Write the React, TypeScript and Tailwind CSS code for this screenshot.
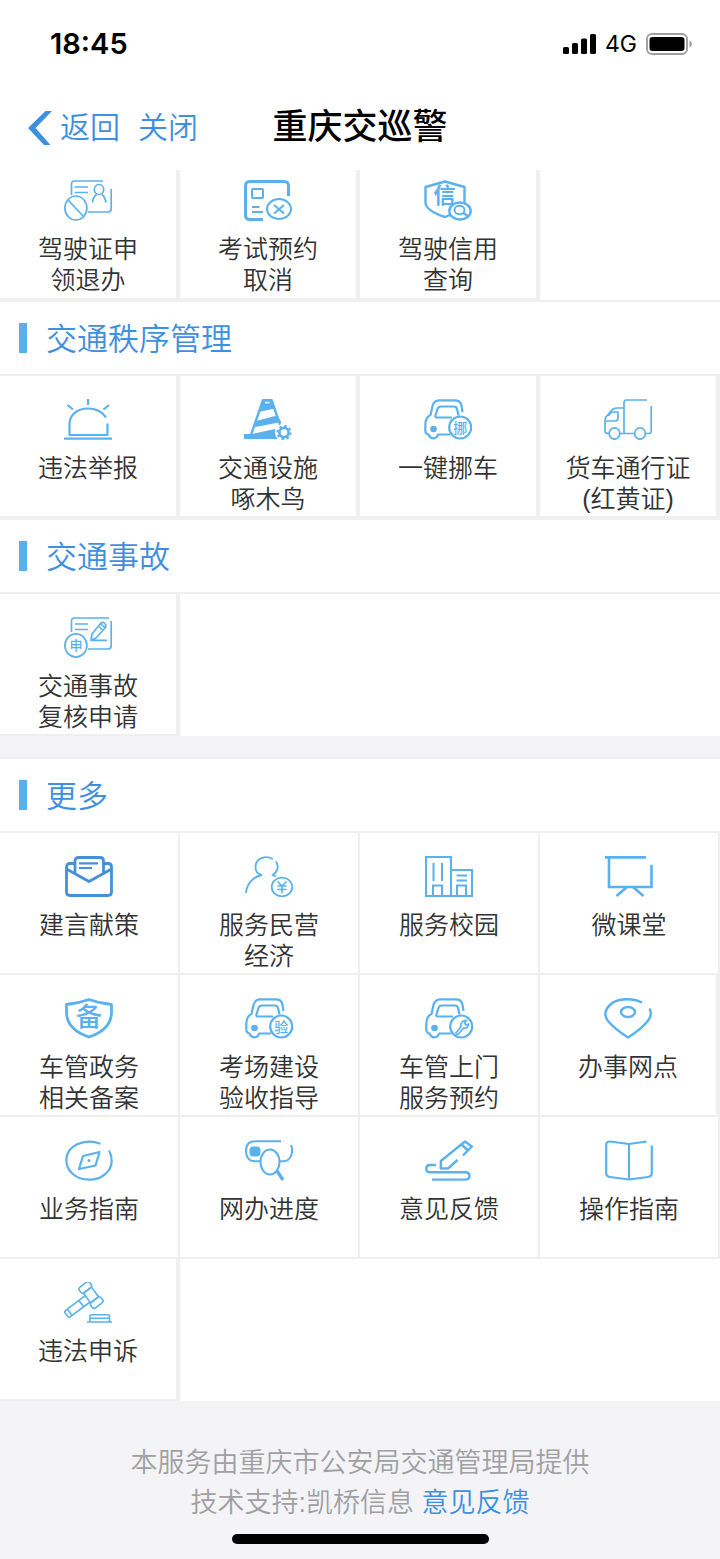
import { Fragment, ReactNode } from "react";

type Service = {
	label: string;
	icon: ReactNode;
	thick?: boolean;
};

// Small character drawn inside an icon
const Glyph = ({ x, y, size, children }: { x: number; y: number; size: number; children: string }) => (
	<text x={x} y={y} fontSize={size} fontWeight="500" textAnchor="middle" fill="currentColor" stroke="none">
		{children}
	</text>
);

const Icon = ({ children, width = 2 }: { children: ReactNode; width?: number }) => (
	<svg
		viewBox="0 0 48 41"
		className="h-[41px] w-12"
		fill="none"
		stroke="currentColor"
		strokeWidth={width}
		strokeLinejoin="round"
		aria-hidden="true"
	>
		{children}
	</svg>
);

const Car = ({ children }: { children: ReactNode }) => (
	<Icon width={2.2}>
		<path d="M38.5 13C37.5 5 37 1.3 31 1.3H15Q10 1.3 8.5 7L6.5 16C1.8 18 1.3 22 1.3 26V32Q1.5 35 4.5 35.5Q6 39.3 9.5 39.3Q13 39.3 14 35.5H26" />
		<path d="M28 18.5H12.5Q11 18.5 11.4 16.5L13.5 10Q14.3 7.5 17 7.5H30Q32.5 7.5 33 10L34.5 16.5" />
		<circle cx="9.5" cy="30" r="3.3" fill="currentColor" stroke="none" />
		<circle cx="36.2" cy="28.5" r="11" />
		{children}
	</Icon>
);

const icons = {
	licenseCancel: (
		<Icon width={1.7}>
			<path d="M7.5 15V4Q7.5 1 10.5 1H39M47.2 9V29Q47.2 32 44 32H24M10.5 7H24M10.5 12.5H24" />
			<ellipse cx="35" cy="9.5" rx="4.7" ry="5" />
			<path d="M28.5 22.5Q29 17 32.5 14.5M42 22.5Q41 17 38 14.5" />
			<ellipse cx="11.9" cy="28" rx="11" ry="12" />
			<path d="M4 20L20 37" />
		</Icon>
	),
	examCancel: (
		<Icon>
			<path d="M44.5 16V6Q44.5 1.5 40 1.5H6Q1.5 1.5 1.5 6V35Q1.5 39.5 6 39.5H19" strokeWidth="3" />
			<rect x="8" y="9" width="11" height="9" rx="1" />
			<path d="M8 27H15.5M8 32H19M30 25L40 33.5M40 25L30 33.5" />
			<ellipse cx="35" cy="29" rx="12" ry="10" />
		</Icon>
	),
	credit: (
		<Icon width={2.4}>
			<path d="M40.5 23V7L21 1.5L1.5 7V23C2 30 12 34 21 37L27 34.5" />
			<text x="20.5" y="23" fontSize="22" fontWeight="bold" textAnchor="middle" fill="currentColor" stroke="none">
				信
			</text>
			<ellipse cx="36" cy="31" rx="10.7" ry="8.5" />
			<ellipse cx="35.5" cy="30" rx="5" ry="4.2" strokeWidth="2" />
			<path d="M39 33L43.5 35.5" />
		</Icon>
	),
	siren: (
		<Icon width={2.2}>
			<path d="M0 39.7H48M42 18.5C38 12.5 31 9.5 24 9.5C13 9.5 5.5 16 5.5 25V36H43.5V24.5M24 0V6M3.5 6L9 10.5M45 6L39.5 10.5" />
		</Icon>
	),
	cone: (
		<Icon>
			<path d="M19 1L7 36M27.5 1L36.5 27" strokeWidth="2.4" />
			<path
				d="M18.5 0H27.5Q28.5 0 29 2L31 9.5L14.5 13ZM12 22L33 16.5L37.5 23L9 28.5ZM0 35H8L31 30L34 40H0Z"
				fill="currentColor"
				stroke="none"
			/>
			<path d="M21 3.6H25.5" stroke="white" strokeWidth="1.4" />
			<circle cx="40" cy="33.5" r="9" fill="white" stroke="none" />
			<circle cx="40" cy="33.5" r="4.6" strokeWidth="2.6" />
			<circle cx="40" cy="33.5" r="6.6" strokeWidth="2" strokeDasharray="2.6 2.58" />
		</Icon>
	),
	moveCar: (
		<Car>
			<Glyph x={36.2} y={33.5} size={14}>挪</Glyph>
		</Car>
	),
	truck: (
		<Icon width={1.7}>
			<path d="M43 1H22Q20 1 20 4V34.5M47.2 7V32Q47.2 34.5 45 34.5H41.5M16 34.5H30.5M20 9H13Q9 9 7 12L2 18Q1 20 1 22V32Q1 34.5 5 34.5" />
			<path d="M1 22H11Q14 22 14 19V13H8Q6 14 4.5 17" />
			<ellipse cx="10.5" cy="34.5" rx="5.3" ry="5.7" />
			<ellipse cx="36" cy="34.5" rx="5.3" ry="5.7" />
		</Icon>
	),
	review: (
		<Icon width={1.7}>
			<path d="M7.5 15V4Q7.5 1 10.5 1H45M47.2 4V29Q47.2 32 44 32H24M11 7H24M11 12.5H24" />
			<path d="M27 23.3L28 17L37 6Q39 4.5 41 6.8Q42.8 9 41 11L32 21ZM34.5 9L39 13.5M37 7L41 11M27 23.3H43" />
			<ellipse cx="11.9" cy="28.5" rx="11" ry="11.6" />
			<Glyph x={11.9} y={33} size={13}>申</Glyph>
		</Icon>
	),
	letter: (
		<span className="text-[#4491d8]">
			<Icon width={2.8}>
				<path d="M10 7.5H5Q1.5 7.5 1.5 11V36Q1.5 39.5 5 39.5H43Q46.5 39.5 46.5 36V11Q46.5 7.5 43 7.5H39M1.5 13L24 25.5L46.5 13" />
				<path d="M10 17V5Q10 1.5 13.5 1.5H35Q38.5 1.5 38.5 5V17" />
				<path d="M14 7.3H33M14 12H27" strokeWidth="2.2" />
			</Icon>
		</span>
	),
	economy: (
		<Icon width={1.8}>
			<path d="M28 3C21-1 10.5 2 10.5 11C10.5 15 13 18 16.5 19C8 21 1.5 28 1 37M31 5.5C34 10 33 16 27.5 19L31 20.5" />
			<ellipse cx="37" cy="31" rx="10.3" ry="9.3" />
			<path d="M32.5 25.5L37 30L41.5 25.5M37 30V37M32.5 30H41.5M32.5 33.5H41.5" strokeWidth="1.6" />
		</Icon>
	),
	campus: (
		<Icon>
			<path d="M1 1H26V40H1ZM26 14H47V40H26M8.5 7V25M17 7V25M8 40V29.5H17V40M31.5 19.5H42M31.5 24.5H42M32 40V29.5H41V40" strokeLinejoin="miter" />
		</Icon>
	),
	board: (
		<Icon width={2.6}>
			<path d="M0 1.4H41M4 1.4V31H46.5V9M22 31L11.5 40M28 31L38.5 40" strokeLinejoin="miter" />
		</Icon>
	),
	shield: (
		<Icon width={2.8}>
			<path d="M24 1.5Q35 5.5 46.5 6.5V14C46.5 28 36 35 24 39C12 35 1.5 28 1.5 14V6.5Q13 5.5 24 1.5Z" />
			<Glyph x={24} y={28} size={26}>备</Glyph>
		</Icon>
	),
	carCheck: (
		<Car>
			<Glyph x={36.2} y={33.5} size={14}>验</Glyph>
		</Car>
	),
	carRepair: (
		<Car>
			<path
				d="M41.5 22.5L39.5 25L41 27L43.5 26C43.5 29 41 31 38.5 30L33 36.5Q31 37 31 35L36 28.5C35 25 38 22 41.5 22.5Z"
				strokeWidth="1.7"
			/>
		</Car>
	),
	pin: (
		<Icon width={2.4}>
			<path d="M38 4.5C29 0 14 0 7 6C0 12 .5 18 4 23C9 29 17 35 24 39.5C32 34.5 40 28 44.5 22C47 18 47.5 14 45.5 10.5" />
			<ellipse cx="24" cy="14" rx="7" ry="5" />
		</Icon>
	),
	compass: (
		<Icon width={2.2}>
			<path d="M35.5 3.8C19-2.5 1.3 6 1.3 20C1.3 31 11 39.7 24 39.7C37 39.7 46.7 31 46.7 21C46.7 17 46 14 44 10.5" />
			<path d="M18 16L34.5 12L30.5 25.5L14 29Z" />
			<circle cx="24" cy="20.5" r="1.5" fill="currentColor" stroke="none" />
		</Icon>
	),
	progress: (
		<Icon>
			<path d="M36 1.2H10C4 1.2 1 5 1 11C1 17 4 21.3 10 21.3H15.5M46 5C48.8 12 46 21.3 38 21.3H34.5" />
			<rect x="4.5" y="6.5" width="11" height="10" rx="4" fill="currentColor" stroke="none" />
			<ellipse cx="25" cy="22" rx="9.5" ry="12.5" />
			<path d="M32 31L38 40" strokeWidth="3.2" />
		</Icon>
	),
	feedback: (
		<Icon width={2.4}>
			<path d="M32.5 20L23 28.5H15.8V21L40 1.5L46.8 6.5L38 15.5M36.5 4.5L42.5 10" />
			<path d="M11 25H5Q1.3 25 1.3 28.5Q1.3 32.3 5 32.3H40Q44.5 32.3 44.5 36Q44.5 39.6 40 39.6H7" />
		</Icon>
	),
	book: (
		<Icon width={2.2}>
			<path d="M41.5 1.5L24 4L5 1.5Q1.2 1.2 1.2 5V33Q1.2 36.5 5 37L24 39.5L43 37Q46.8 36.5 46.8 33V5.5M24 4V39.5" />
		</Icon>
	),
	gavel: (
		<Icon width={1.6}>
			<path d="M23 40H48M26 40V34Q26 32.7 27.5 32.7H44Q45.5 32.7 45.5 34V40M26 36.3H45.5" />
			<g transform="translate(27 13) rotate(-37)">
				<rect x="-6.5" y="-13" width="13" height="7" rx="2.5" />
				<rect x="-5" y="-6" width="10" height="12" />
				<rect x="-6.5" y="6" width="13" height="7" rx="2.5" />
				<path d="M-5-3H-29Q-31.5-3-31.5-1V3Q-31.5 5-29 5H-5M-27.5-3V5M-13-3V5" />
			</g>
		</Icon>
	),
};

const license: Service[] = [
	{ label: "驾驶证申\n领退办", icon: icons.licenseCancel, thick: true },
	{ label: "考试预约\n取消", icon: icons.examCancel, thick: true },
	{ label: "驾驶信用\n查询", icon: icons.credit, thick: true },
];

const order: Service[] = [
	{ label: "违法举报", icon: icons.siren, thick: true },
	{ label: "交通设施\n啄木鸟", icon: icons.cone, thick: true },
	{ label: "一键挪车", icon: icons.moveCar, thick: true },
	{ label: "货车通行证\n(红黄证)", icon: icons.truck, thick: true },
];

const accident: Service[] = [{ label: "交通事故\n复核申请", icon: icons.review, thick: true }];

const more: Service[] = [
	{ label: "建言献策", icon: icons.letter },
	{ label: "服务民营\n经济", icon: icons.economy },
	{ label: "服务校园", icon: icons.campus },
	{ label: "微课堂", icon: icons.board },
	{ label: "车管政务\n相关备案", icon: icons.shield },
	{ label: "考场建设\n验收指导", icon: icons.carCheck },
	{ label: "车管上门\n服务预约", icon: icons.carRepair },
	{ label: "办事网点", icon: icons.pin, thick: true },
	{ label: "业务指南", icon: icons.compass },
	{ label: "网办进度", icon: icons.progress },
	{ label: "意见反馈", icon: icons.feedback },
	{ label: "操作指南", icon: icons.book },
	{ label: "违法申诉", icon: icons.gavel, thick: true },
];

const ServiceGrid = ({ items, first }: { items: Service[]; first?: boolean }) => (
	<div className="grid grid-cols-4 bg-white">
		{items.map(item => (
			<a
				key={item.label}
				href="#"
				className={`flex flex-col items-center gap-[13px] border-b-2 border-[#efefef] ${
					first ? "h-[130px] pt-[10px]" : "h-[142px] pt-[23px]"
				} ${item.thick ? "border-r-4" : "border-r-2"}`}
			>
				<span className="text-[#5ab1ee]">{item.icon}</span>
				<span className="whitespace-pre text-center text-[25px] leading-[31px] text-[#333]">{item.label}</span>
			</a>
		))}
	</div>
);

const SectionTitle = ({ children }: { children: string }) => (
	<div className="flex h-[76px] items-center border-y-2 border-[#f0f0f0] bg-white pl-[19px]">
		<span className="h-[30px] w-2 bg-[#5aaeea]" />
		<h2 className="pl-[19px] pt-1 text-[31px] leading-10 text-[#3f8fe0]">{children}</h2>
	</div>
);

const StatusBar = () => (
	<div className="flex h-[88px] items-center justify-between pl-[50px] pr-7 font-[Inter,sans-serif] text-black">
		<span className="text-[29px] font-semibold">18:45</span>
		<div className="flex items-center gap-[9px]">
			<svg viewBox="0 0 33 20" className="h-5 w-[33px]" aria-hidden="true">
				<rect x="0" y="13" width="6" height="7" rx="1.5" />
				<rect x="9" y="9" width="6" height="11" rx="1.5" />
				<rect x="18" y="4.5" width="6" height="15.5" rx="1.5" />
				<rect x="27" y="0" width="6" height="20" rx="1.5" />
			</svg>
			<span className="text-[23px] font-normal">4G</span>
			<svg viewBox="0 0 46 22" className="h-[22px] w-[46px]" aria-hidden="true">
				<rect x="1" y="1" width="40" height="20" rx="5" fill="none" stroke="#a0a0a0" strokeWidth="2" />
				<rect x="3.5" y="4" width="35" height="14" rx="3" />
				<path d="M43.5 7.5Q46 8.5 46 11Q46 13.5 43.5 14.5Z" fill="#a0a0a0" />
			</svg>
		</div>
	</div>
);

export default function App() {
	const sections = [
		{ title: "交通秩序管理", items: order },
		{ title: "交通事故", items: accident },
	];

	return (
		<div className="w-full bg-[#f4f4f6] font-['Liberation_Sans','Noto_Sans_CJK_SC',sans-serif] font-[350]">
			<header className="bg-white">
				<StatusBar />
				<nav className="grid h-[82px] grid-cols-[1fr_auto_1fr] items-center pb-[3px] pl-7">
					<div className="flex items-center text-[30px] text-[#3f8fe0]">
						<button type="button" className="flex items-center gap-2">
							<svg viewBox="0 0 24 34" className="h-[34px] w-6" aria-hidden="true">
								<path d="M17.5 0H24L7.5 17L22.5 34H16L0 17Z" fill="currentColor" />
							</svg>
							返回
						</button>
						<button type="button" className="ml-[18px]">
							关闭
						</button>
					</div>
					<h1 className="pr-7 text-[35px] font-medium text-black">重庆交巡警</h1>
				</nav>
			</header>

			<main>
				<ServiceGrid items={license} first />
				{sections.map(({ title, items }) => (
					<Fragment key={title}>
						<SectionTitle>{title}</SectionTitle>
						<ServiceGrid items={items} />
					</Fragment>
				))}
				<div className="mt-[21px]">
					<SectionTitle>更多</SectionTitle>
					<ServiceGrid items={more} />
				</div>
			</main>

			<footer className="flex flex-col items-center pt-[42px] text-center text-[27px] leading-10 text-[#a0a0a2]">
				<p>本服务由重庆市公安局交通管理局提供</p>
				<p>
					技术支持:凯桥信息{" "}
					<a href="#" className="text-[#3f8fe0]">
						意见反馈
					</a>
				</p>
				<div className="mb-[15px] mt-[11px] h-[10px] w-[257px] rounded-full bg-black" />
			</footer>
		</div>
	);
}
